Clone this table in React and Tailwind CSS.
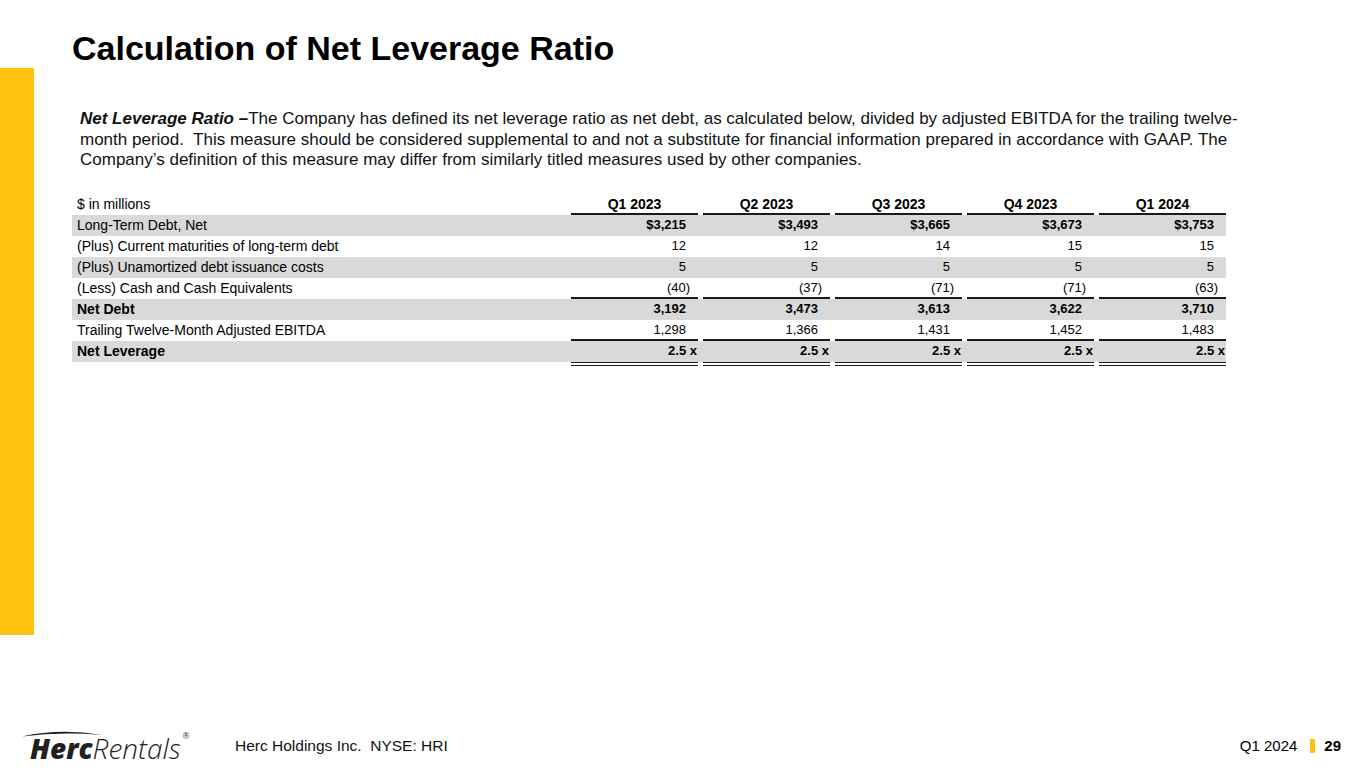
// Net leverage ratio slide
const rows = [
  { label: 'Long-Term Debt, Net', values: ['$3,215', '$3,493', '$3,665', '$3,673', '$3,753'], gray: true, valBold: true },
  { label: '(Plus) Current maturities of long-term debt', values: ['12', '12', '14', '15', '15'] },
  { label: '(Plus) Unamortized debt issuance costs', values: ['5', '5', '5', '5', '5'], gray: true },
  { label: '(Less) Cash and Cash Equivalents', values: ['(40)', '(37)', '(71)', '(71)', '(63)'], line: 'single', paren: true },
  { label: 'Net Debt', values: ['3,192', '3,473', '3,613', '3,622', '3,710'], gray: true, labelBold: true, valBold: true },
  { label: 'Trailing Twelve-Month Adjusted EBITDA', values: ['1,298', '1,366', '1,431', '1,452', '1,483'], line: 'single' },
  { label: 'Net Leverage', values: ['2.5 x', '2.5 x', '2.5 x', '2.5 x', '2.5 x'], gray: true, labelBold: true, valBold: true, line: 'double', times: true },
];

const quarters = ['Q1 2023', 'Q2 2023', 'Q3 2023', 'Q4 2023', 'Q1 2024'];

const HercLogo = () => (
  <div className="relative flex items-end h-[32px] text-[#231f20]">
    <svg className="absolute left-0 top-[0px]" width="84" height="8" viewBox="0 0 84 8">
      <path d="M0 6.5 Q38 -2 80 5 Q38 1.5 0 6.5 Z" fill="#231f20" />
    </svg>
    <span className="ml-[8px] text-[28px] leading-[28px] font-black italic" style={{ fontFamily: '"Open Sans", "Liberation Sans", sans-serif' }}>
      Herc
    </span>
    <span className="text-[28px] leading-[28px] font-light italic" style={{ fontFamily: '"Open Sans", "Liberation Sans", sans-serif' }}>
      Rentals
    </span>
    <span className="self-start mt-[2px] ml-[2px] text-[9px] leading-none">®</span>
  </div>
);

export default function App() {
  return (
    <div className="w-[1365px] h-[768px] bg-white flex flex-col overflow-hidden text-black" style={{ fontFamily: '"Liberation Sans", Arial, sans-serif' }}>
      {/* Title */}
      <div className="h-[68px] pl-[72px] pt-[31px]">
        <h1 className="text-[34px] leading-[34px] font-bold">Calculation of Net Leverage Ratio</h1>
      </div>

      <div className="flex h-[567px]">
        <div className="w-[34px] h-full bg-[#ffc20e]" />
        <div className="pl-[38px] flex flex-col">
          {/* Definition */}
          <p className="mt-[41px] pl-[8px] text-[17px] leading-[20.5px] text-[#111]">
            <span className="font-bold italic">Net Leverage Ratio –</span>The Company has defined its net leverage ratio as net debt, as calculated below, divided by adjusted EBITDA for the trailing twelve-
            <br />
            {'month period.\u00a0 This measure should be considered supplemental to and not a substitute for financial information prepared in accordance with GAAP. The'}
            <br />
            Company’s definition of this measure may differ from similarly titled measures used by other companies.
          </p>

          {/* Table */}
          <div className="mt-[23px] w-[1154px]">
            <div className="flex h-[21px]">
              <div className="w-[494px] pl-[5px] text-[14px] leading-[21px]">$ in millions</div>
              {quarters.map((q) => (
                <div key={q} className="w-[132px] pl-[5px] h-full">
                  <div className="h-full border-b-2 border-[#1a1a1a] text-center text-[14px] leading-[20px] font-bold">{q}</div>
                </div>
              ))}
            </div>
            {rows.map((r) => (
              <div key={r.label} className={`flex h-[21px] ${r.gray ? 'bg-[#d9d9d9]' : ''}`}>
                <div className={`w-[494px] pl-[5px] text-[14px] leading-[20px] ${r.labelBold ? 'font-bold' : ''}`}>{r.label}</div>
                {r.values.map((v, i) => (
                  <div key={i} className="w-[132px] pl-[5px] h-full">
                    <div
                      className={`text-right text-[13px] leading-[20px] ${r.valBold ? 'font-bold' : ''} ${
                        r.line === 'single' ? 'h-full border-b-2 border-[#1a1a1a]' : ''
                      } ${r.line === 'double' ? 'h-[25px] border-b-4 border-double border-[#1a1a1a]' : ''} ${
                        !r.line ? 'h-full' : ''
                      } ${r.times ? 'pr-[1px]' : r.paren ? 'pr-[8px]' : 'pr-[12px]'}`}
                    >
                      {v}
                    </div>
                  </div>
                ))}
              </div>
            ))}
          </div>
        </div>
      </div>

      {/* Footer */}
      <div className="mt-auto h-[42px] flex items-center pb-[2px] pr-[24px]">
        <div className="pl-[22px] w-[235px]">
          <HercLogo />
        </div>
        <div className="text-[15.5px] leading-[18px] text-[#111] whitespace-pre">Herc Holdings Inc.  NYSE: HRI</div>
        <div className="ml-auto flex items-center text-[15px] leading-[18px]">
          <span>Q1 2024</span>
          <span className="ml-[13px] w-[5px] h-[14px] bg-[#ffc20e]" />
          <span className="ml-[9px] font-bold">29</span>
        </div>
      </div>
    </div>
  );
}
